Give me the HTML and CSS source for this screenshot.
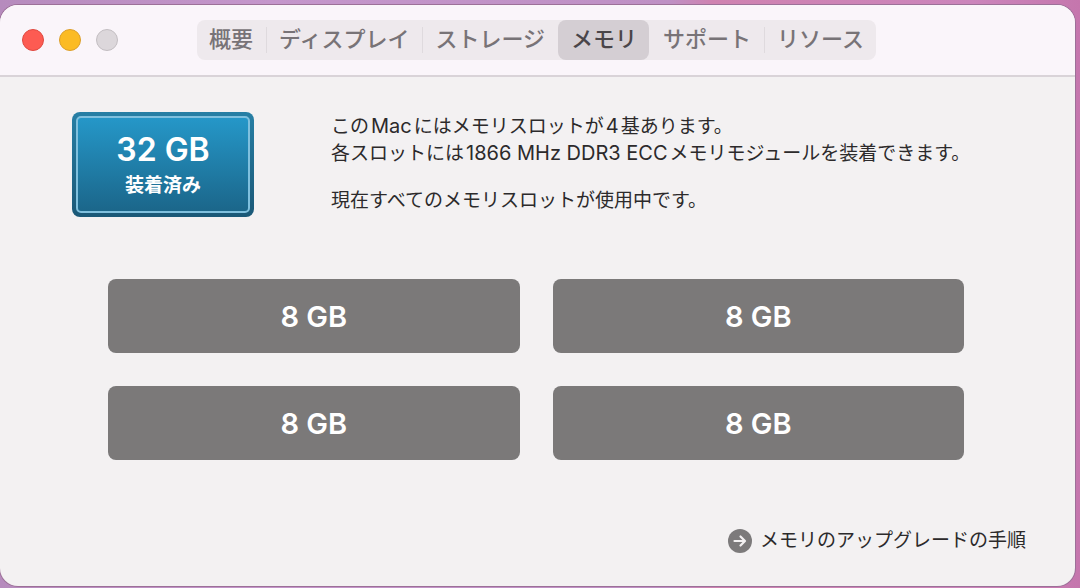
FILE: index.html
```html
<!DOCTYPE html>
<html lang="ja">
<head>
<meta charset="utf-8">
<meta name="viewport" content="width=device-width, initial-scale=1">
<title>メモリ</title>
<link rel="stylesheet" href="styles.css">
</head>
<body>
<div class="window">
  <header class="titlebar">
    <div class="controls">
      <button class="light light-close" type="button" aria-label="閉じる"></button>
      <button class="light light-minimize" type="button" aria-label="しまう"></button>
      <button class="light light-zoom" type="button" aria-label="拡大" disabled></button>
    </div>
    <nav class="tabs">
      <button class="tab" type="button">概要</button>
      <button class="tab" type="button">ディスプレイ</button>
      <button class="tab" type="button">ストレージ</button>
      <button class="tab tab-active" type="button" aria-current="page">メモリ</button>
      <button class="tab" type="button">サポート</button>
      <button class="tab" type="button">リソース</button>
    </nav>
  </header>
  <main class="content">
    <section class="summary">
      <div class="badge">
        <div class="badge-inner">
          <strong class="badge-size">32 GB</strong>
          <span class="badge-label">装着済み</span>
        </div>
      </div>
      <div class="description">
        <p>この<span class="latin">Mac</span>にはメモリスロットが<span class="latin">4</span>基あります。<br>各スロットには<span class="latin">1866 MHz DDR3 ECC</span>メモリモジュールを装着できます。</p>
        <p>現在すべてのメモリスロットが使用中です。</p>
      </div>
    </section>
    <ul class="slots">
      <li class="slot">8 GB</li>
      <li class="slot">8 GB</li>
      <li class="slot">8 GB</li>
      <li class="slot">8 GB</li>
    </ul>
    <a class="upgrade" href="#upgrade">
      <svg class="upgrade-icon" viewBox="0 0 24 24" aria-hidden="true">
        <circle cx="12" cy="12" r="12" fill="#7c7a7b"/>
        <path d="M6.500 12h10M12.500 7.500l4.500 4.500-4.500 4.500" fill="none" stroke="#f3f1f2" stroke-width="2.200" stroke-linecap="round" stroke-linejoin="round"/>
      </svg>
      <span>メモリのアップグレードの手順</span>
    </a>
  </main>
</div>
</body>
</html>
```

FILE: styles.css
```css
* {
  box-sizing: border-box;
}

body {
  margin: 0;
  min-height: 100vh;
  display: flex;
  padding: 5px 5px 2px 0;
  background: linear-gradient(to right, #b68bbd 0%, #c496cb 25%, #be90c4 62%, #cf82b0 66%, #cb85bb 90%, #c576ad 100%);
  color: #2c2a2b;
  font-family: Inter, "Noto Sans CJK JP", sans-serif;
  font-size: 19px;
}

button {
  margin: 0;
  padding: 0;
  border: 0;
  background: none;
  color: inherit;
  font: inherit;
}

.window {
  flex: 1;
  display: flex;
  flex-direction: column;
  overflow: hidden;
  border-radius: 18px;
  background: #f3f1f2;
  box-shadow: 0 0 0 1px #9c7098;
}

.titlebar {
  display: flex;
  align-items: center;
  gap: 79px;
  padding: 15px 22px;
  border-bottom: 2px solid #d9d3d8;
  background: #faf5fa;
}

.controls {
  display: flex;
  gap: 15px;
}

.light {
  width: 22px;
  height: 22px;
  border: 1px solid;
  border-radius: 50%;
}

.light-close {
  border-color: #e0483f;
  background: #fd5b52;
}

.light-minimize {
  border-color: #dc9f2a;
  background: #fbbb24;
}

.light-zoom {
  border-color: #c3bec2;
  background: #dcd7db;
}

.tabs {
  display: flex;
  gap: 1px;
  height: 40px;
  border-radius: 8px;
  background: #eee9ed;
}

.tab {
  display: flex;
  align-items: center;
  padding: 0 12px 2px;
  color: #787377;
  font-size: 22px;
  font-weight: 500;
  line-height: 32px;
  white-space: nowrap;
}

.tab + .tab {
  border-left: 1px solid transparent;
  border-image: linear-gradient(transparent 20%, #dfdade 20%, #dfdade 80%, transparent 80%) 1;
}

.tab + .tab-active,
.tab-active + .tab {
  border-image: none;
}

.tab-active {
  border-radius: 8px;
  background: #d4ced3;
  color: #4a4549;
}

.content {
  flex: 1;
  display: flex;
  flex-direction: column;
  padding: 35px 49px 31px 72px;
}

.summary {
  display: flex;
  gap: 77px;
}

.badge {
  width: 182px;
  height: 105px;
  padding: 4px;
  border-radius: 8px;
  background: linear-gradient(#277fa5, #1a5877);
}

.badge-inner {
  height: 100%;
  display: flex;
  flex-direction: column;
  align-items: center;
  justify-content: center;
  padding-top: 3px;
  border: 2px solid #7fc0de;
  border-radius: 5px;
  background: linear-gradient(#2597c8, #1b668a);
  color: #fff;
}

.badge-size {
  font-size: 32px;
  font-weight: 600;
  line-height: 40px;
}

.badge-label {
  font-size: 19px;
  font-weight: 700;
  line-height: 32px;
}

.description {
  padding-top: 1px;
  line-height: 26px;
}

.description p {
  margin: 0;
  white-space: nowrap;
}

.description p + p {
  margin-top: 21px;
}

.latin {
  margin: 0 2px;
  font-size: 20px;
}

.slots {
  display: grid;
  grid-template-columns: 1fr 1fr;
  gap: 33px;
  margin: 62px 62px 0 36px;
  padding: 0;
  list-style: none;
}

.slot {
  display: flex;
  align-items: center;
  justify-content: center;
  height: 74px;
  border-radius: 8px;
  background: #7b7979;
  color: #fff;
  font-size: 29px;
  font-weight: 600;
}

.upgrade {
  display: flex;
  align-items: center;
  align-self: flex-end;
  gap: 8px;
  margin-top: auto;
  color: inherit;
  line-height: 28px;
  text-decoration: none;
}

.upgrade-icon {
  width: 24px;
  height: 24px;
}
```
